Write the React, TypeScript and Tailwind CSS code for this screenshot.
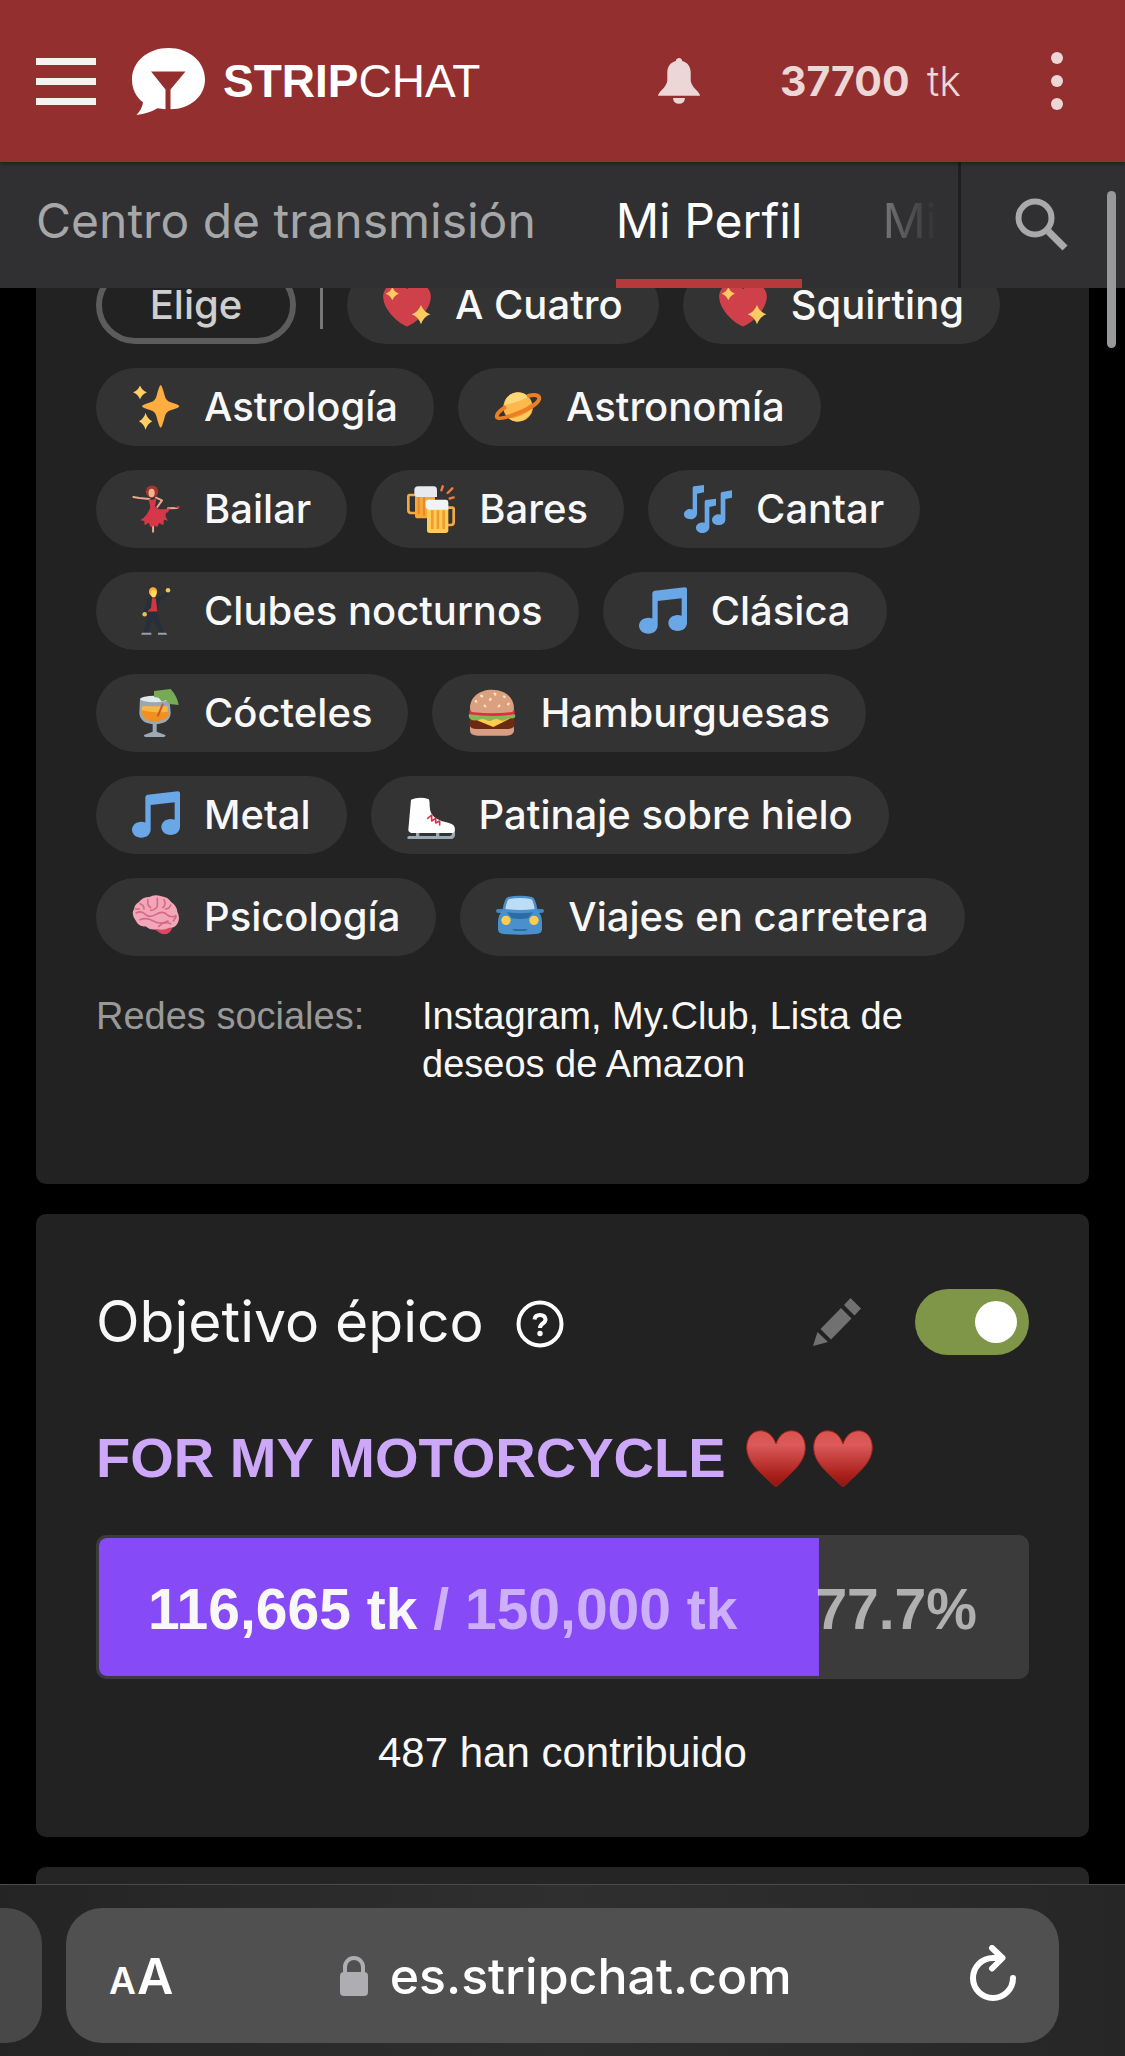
import type { ReactNode } from "react";

const NOTE =
  "M34.209.206L11.791 2.793C10.806 2.907 10 3.811 10 4.803v18.782C9.09 23.214 8.075 23 7 23c-3.865 0-7 2.685-7 6 0 3.314 3.135 6 7 6s7-2.686 7-6V10.539l18-2.077v13.124c-.91-.372-1.925-.586-3-.586-3.865 0-7 2.685-7 6 0 3.314 3.135 6 7 6s7-2.686 7-6V1.803c0-.992-.806-1.71-1.791-1.597z";

const art: Record<string, ReactNode> = {
  heart: (
    <>
      <path
        fill="#d0404b"
        d="M35.885 11.833c0-5.45-4.418-9.868-9.867-9.868-3.308 0-6.227 1.633-8.018 4.129-1.791-2.496-4.71-4.129-8.017-4.129-5.45 0-9.868 4.417-9.868 9.868 0 .772.098 1.52.266 2.241C1.751 22.587 11.216 31.568 18 34.034c6.783-2.466 16.249-11.447 17.617-19.959.17-.721.268-1.469.268-2.242z"
      />
      <path
        fill="#fbcb62"
        d="M7 4.500Q8.300 8.200 12 9.500Q8.300 10.800 7 14.500Q5.700 10.800 2 9.500Q5.700 8.200 7 4.500zM28.500 18Q30.500 23.300 35.500 25Q30.500 26.800 28.500 32.500Q26.500 26.800 21.500 25Q26.500 23.300 28.500 18z"
      />
    </>
  ),
  sparkles: (
    <>
      <path
        fill="#ffac40"
        d="M21.500 1.500Q22.500 1.500 24.800 10.500Q25.800 13.500 29 14.500Q35.500 16.300 35.500 17.500Q35.500 18.700 29 20.500Q25.800 21.500 24.800 24.500Q22.500 33.500 21.500 33.500Q20.500 33.500 18.200 24.500Q17.200 21.500 14 20.500Q7.500 18.700 7.500 17.500Q7.500 16.300 14 14.500Q17.200 13.500 18.200 10.500Q20.500 1.500 21.500 1.500z"
      />
      <path
        fill="#ffcf66"
        d="M6 1.800Q7.500 5.500 11.200 7Q7.500 8.500 6 12.200Q4.500 8.500 .8 7Q4.500 5.500 6 1.800zM10.200 22.500Q11.700 27 15.200 28.700Q11.700 30.500 10.200 35Q8.700 30.500 5.200 28.700Q8.700 27 10.200 22.500z"
      />
    </>
  ),
  planet: (
    <>
      <circle cx="18" cy="18" r="11" fill="#ffb84d" />
      <path fill="#ffd778" d="M9 12a11 11 0 0 1 17-1.500q-8 4-18 6z" />
      <path fill="#f59b2e" d="M9 24q10-1 19-9l1 5A11 11 0 0 1 22 28q-8 2-13-4z" />
      <path fill="#ffcc63" d="M11 26.500q8 0 17.500-7A11 11 0 0 1 11 26.500z" />
      <path
        fill="none"
        stroke="#ed7f23"
        strokeWidth="3"
        strokeLinecap="round"
        d="M26 9.500q6.500-1.300 7.800 1.200c1 3-5 7.500-13.500 11S3.500 28 2.200 25.500q-.8-2.500 5.600-7"
      />
    </>
  ),
  dancer: (
    <>
      <path
        fill="none"
        stroke="#e8a98a"
        strokeWidth="1.500"
        strokeLinecap="round"
        strokeLinejoin="round"
        d="M13 10.500L5.500 9.700 1 9M18 9.500l4.500 2-3.500 5M27 17.500l7-.3M15.800 31v4"
      />
      <circle cx="15" cy="5" r="4.700" fill="#a5382c" />
      <ellipse cx="14.700" cy="6" rx="2.300" ry="3.200" fill="#edb597" />
      <path
        fill="#d63849"
        d="M12.500 10.300l2.500 1 3.300-1.300-1 6.500c2.500 2.500 8 1.800 11.200.7l-1.500 3.300c-2 0-2 2-1.500 3.800l1.500 2.500-3-.7-.5 4-3-1.600-1.700 3-2.200-1.200-2.600 1.300-1.500-3.200-3 1.800-.3-3.200-3-.5c4-2.500 6.500-6 7.500-10zM31.500 17l4-1.500v2.200z"
      />
    </>
  ),
  beer: (
    <>
      <path
        fill="none"
        stroke="#f4a944"
        strokeWidth="2"
        d="M7 7.500H2q-1 0-1 1V19q0 2 2 2h4M30 17h4q1 0 1 1v10q0 2-2 2h-3"
      />
      <path fill="#f9a63a" d="M6 6h15v19H8q-2 0-2-2z" />
      <path fill="#e88926" d="M8 9h1.500v13H8zM12 9h1.500v14H12z" />
      <path fill="#e7ebef" d="M5.500 4q0-3 3-3H20q2.500 0 2.500 3v5H8q-2.500 0-2.500-3z" />
      <path fill="#ffcb57" d="M15 16h16v18q0 2-2 2H17q-2 0-2-2z" />
      <path fill="#f39c2d" d="M18 19h2v14h-2zM22.200 19h2v14h-2zM26.500 19h2v14h-2z" />
      <path fill="#f1f4f6" d="M14 13q0-2 2-2h13q2 0 2 2.500v5H17q-3 0-3-3z" />
      <path
        stroke="#f07d3d"
        strokeWidth="1.800"
        strokeLinecap="round"
        d="M26.800 1l-1 3M34 2.500L30.500 6M35 9.300l-3 .8"
      />
    </>
  ),
  notes: (
    <path
      fill="#6aa7e6"
      d="M6.500 2.200q0-1 1-1.200L15 0v5.500l-5.200 1V21c0 2.500-2 4.700-4.800 4.700C1.700 25.700 0 24 0 22s1.900-4 4.500-4q1.200 0 2 .3zM15.500 12.500q0-1 1-1.200l7.500-1v5l-5 1.200V31.500c0 2.500-2.300 4.500-5 4.500s-5-1.700-5-4 2.200-3.900 5-3.900q.8 0 1.500.2zM27.500 6.500q0-1 1-1.200L36 4v5.500l-5 1V26c0 2.300-2.200 4-5 4s-5-1.500-5-3.800S23.200 22 26 22q.8 0 1.500.3z"
    />
  ),
  note: <path fill="#6aa7e6" d={NOTE} />,
  suit: (
    <>
      <path
        fill="#27303a"
        d="M12 8l6 .5 6-3 2.500-2 1 1.500L21 11l-2.500 8 2.500 7 3 8h-3.500L15.500 25 12 34H8.500l3-9 .8-7-2.500 2-1.500-1z"
      />
      <ellipse cx="15.800" cy="3.600" rx="3.100" ry="3.500" fill="#ffad3b" />
      <ellipse cx="16.200" cy="5" rx="2" ry="2.800" fill="#ffdc5d" />
      <path fill="#d4363e" d="M15 8.500h2.800l1.200 9.800h-7.500l2.800-2.800z" />
      <circle cx="27" cy="2.400" r="1.700" fill="#f2cb57" />
      <circle cx="9.500" cy="20.500" r="1.700" fill="#e8c14f" />
      <path fill="#96a0a9" d="M7.500 34.300h7v1.500H6.800zM19.500 34.300h6l1 1.500h-7z" />
    </>
  ),
  cocktail: (
    <>
      <path fill="#9aaab6" d="M15.500 24h3v8l6.500 2.500q.5 1.300-1.500 1.500h-13q-2-.2-1.500-1.500l6.500-2.500z" />
      <path fill="#9ba8b2" d="M6 7h22l1 11q-.5 8-12 8.500Q6 26 5.500 18z" />
      <path fill="#f19020" d="M7.500 14h19.300l.7 5q-1 5-10.500 5.500Q8 24 7.500 18z" />
      <path fill="#fcb640" d="M7.500 13h19.300v4q-9 1.500-19.300-1z" />
      <ellipse cx="17" cy="7.500" rx="10.700" ry="2.500" fill="#e2e9ee" />
      <path stroke="#c35b2a" strokeWidth="1.500" strokeLinecap="round" d="M23 11.500L19.500 20" />
      <path fill="#76aa55" d="M16.500 1.500L29 0q5 5.500 6 12l-7-.8-2.500-3-3 1.300-2.500-3-3.500-.5z" />
    </>
  ),
  burger: (
    <>
      <path fill="#d99e82" d="M1.500 27h33v4q0 4-6 4H7.500q-6 0-6-4z" />
      <path fill="#6d2a12" d="M1 24q0-2 3-2h28q3 0 3 2v2q0 4-6 4H7q-6 0-6-4z" />
      <path fill="#ffcc4d" d="M1.500 20.500h33L28 24l-9 4.500L8 24z" />
      <path fill="#88b653" d="M.5 19.500q0-1 2-1h31q2 0 2 1.500 0 2.500-3.500 2-2 0-3.500 1-2.500 1.500-5 0-2.500-1.200-5 .3-2.500 1.500-5 0-2.500-1.500-5-.3-8 2-8-3.500z" />
      <path fill="#dd2e44" d="M1 16h34v3q-17 2.500-34 0z" />
      <path fill="#dba07f" d="M18 .5c10 0 16.500 6 16.500 14q0 3-3 3-13.500 1.500-27 0-3 0-3-3C1.500 6.500 8 .5 18 .5z" />
      <path
        stroke="#ffe8b6"
        strokeWidth="1.700"
        strokeLinecap="round"
        d="M10 5l.5.500M20 3.500l.4.600M27 5.500l.4.500M5.800 9l.4.500M17 7.500l-.5.600M30.500 11l-.4.500M12.500 12.500l.4.500M23.500 12.500l-.4.500"
      />
    </>
  ),
  skate: (
    <>
      <path
        stroke="#9babb6"
        strokeWidth="2.500"
        fill="none"
        strokeLinecap="round"
        d="M1.500 35H32q3 0 3-3.500M8 30v4M23 30v4"
      />
      <path
        fill="#fff"
        d="M3 6.500Q9 4 16 6q1 0 1 5 0 6 4.500 9.500 4 2.500 10 3.500 4.500 1 4.500 5 0 2.500-3 2.500H5q-4 0-4-2.500z"
      />
      <path
        stroke="#dd2e44"
        strokeWidth="1.200"
        strokeLinecap="round"
        strokeLinejoin="round"
        fill="none"
        d="M15.500 20.500l3-2.500v4.500l3-2v3.500l3-1.500v3"
      />
    </>
  ),
  brain: (
    <>
      <path fill="#db4860" d="M17 25l11-2 2.500 2q-1.500 6-6 6-3.500 0-7.500-4z" />
      <path
        fill="#f2a6b8"
        d="M5 7q3-4 8-4 4-2.500 9-.5 5 .5 7.500 4.500 4 2.500 4.500 7 2.500 5 0 9-2 3.500-6 3-5 2.500-9 1-5 1.500-9-2-5 .5-7-4Q-1 16 1.500 12 2 8.500 5 7z"
      />
      <path
        fill="none"
        stroke="#d36b86"
        strokeWidth="1.200"
        strokeLinecap="round"
        d="M6 8q3 1 3 4M12 5q-1 4 2 6M19 4v6q-2 3-5 3M24 5q2 4-1 6M29 9q-1 3-4 3M3 15q4-2 7 1t8 0 8 0 7 1M6 20q5-2 10 1t11 0M20 25q4-4 9-2M2.500 12h3M31 21l2-3"
      />
    </>
  ),
  car: (
    <>
      <path fill="#4289c1" d="M0 13.500q0-1.500 1.500-1.500H5v3H2q-2 0-2-1.500zM36 13.500q0-1.500-1.500-1.500H31v3h3q2 0 2-1.500z" />
      <path
        fill="#4a90cc"
        d="M9 3q9-2 18 0 2.500.5 4 9l2 4q1.500 2 1.500 7v4q0 3-3 3.500-13.500 1.500-27 0-3-.5-3-3.500v-4q0-5 1.500-7l2-4q1.500-8.500 4-9z"
      />
      <path fill="#bbddf5" d="M10 4.500q8-1.500 16 0 1.800.5 3 7.500-11 1.500-22 0 1.200-7 3-7.500z" />
      <path fill="#2b6ca3" d="M8 14.500q10 1.500 20 0-3 3-4 4.500-6 1-12 0-1-1.500-4-4.500zM12 27h12l-2 1.500h-8z" />
      <circle cx="7.500" cy="20.500" r="3.500" fill="#ffcc4d" />
      <circle cx="28.500" cy="20.500" r="3.500" fill="#ffcc4d" />
    </>
  ),
};

const interests: [string, string][] = [
  ["heart", "A Cuatro"],
  ["heart", "Squirting"],
  ["sparkles", "Astrología"],
  ["planet", "Astronomía"],
  ["dancer", "Bailar"],
  ["beer", "Bares"],
  ["notes", "Cantar"],
  ["suit", "Clubes nocturnos"],
  ["note", "Clásica"],
  ["cocktail", "Cócteles"],
  ["burger", "Hamburguesas"],
  ["note", "Metal"],
  ["skate", "Patinaje sobre hielo"],
  ["brain", "Psicología"],
  ["car", "Viajes en carretera"],
];

function Chip({ icon, label }: { icon: string; label: string }) {
  return (
    <li className="flex h-[78px] items-center gap-6 rounded-full bg-[#333333] px-9">
      <svg viewBox="0 0 36 36" className="size-12 shrink-0" fill="none" aria-hidden="true">
        {art[icon]}
      </svg>
      <span className="font-medium whitespace-nowrap text-[#f8f8f8]">{label}</span>
    </li>
  );
}

function Header() {
  return (
    <header className="z-20 flex h-[162px] shrink-0 items-center bg-[#942f30] px-9 shadow-[0_2px_4px_rgba(0,0,0,0.35)]">
      <button aria-label="Menú" className="flex w-[60px] flex-col gap-[13px]">
        <span className="h-[7px] bg-[#f6f2f2]" />
        <span className="h-[7px] bg-[#f6f2f2]" />
        <span className="h-[7px] bg-[#f6f2f2]" />
      </button>
      <a href="#inicio" className="ml-9 flex items-center gap-[18px] text-white">
        <svg viewBox="0 0 73 67" className="h-[67px] w-[73px]" aria-hidden="true">
          <path
            fill="#fff"
            d="M36.500 0C57 0 73 13.500 73 31.500 73 48.500 58 61 38.500 61.300V41.500L53.500 23.500H19L33.500 41.500V61.300L25.500 60.300Q17 65.500 4.500 67 10.500 60.500 11 54.300C4 49 0 41 0 31.500 0 13.500 16 0 36.500 0z"
          />
        </svg>
        <span className="font-['Liberation_Sans',sans-serif] text-[46px] leading-none">
          <b>STRIP</b>CHAT
        </span>
      </a>
      <button aria-label="Notificaciones" className="ml-auto">
        <svg viewBox="0 0 42 46" className="h-[46px] w-[42px]" aria-hidden="true">
          <path
            fill="#ecd6d6"
            d="M21 0q2.800 0 3.200 3C30 4.500 32.500 9 32.700 14v8q0 4 4.500 9Q42 35.500 42 37.800H0Q0 35.500 4.800 31q4.500-5 4.500-9v-8C9.500 9 12 4.500 17.800 3 18.200 0 21 0 21 0zM15 40h12q-.5 5.800-6 5.800T15 40z"
          />
        </svg>
      </button>
      <p className="ml-20 text-[41px] leading-none whitespace-nowrap text-[#ecd6d6]">
        <b>37700</b> <span className="ml-1.5 font-light">tk</span>
      </p>
      <button aria-label="Más opciones" className="mr-[26px] ml-[90px] flex flex-col gap-[11px]">
        <span className="size-3 rounded-full bg-[#ecd6d6]" />
        <span className="size-3 rounded-full bg-[#ecd6d6]" />
        <span className="size-3 rounded-full bg-[#ecd6d6]" />
      </button>
    </header>
  );
}

function Tabs() {
  return (
    <nav className="z-10 flex h-[126px] shrink-0 bg-[#303032]">
      <div className="flex min-w-0 flex-1 gap-20 overflow-hidden border-r-3 border-[#1f1f20] pl-9 text-5xl whitespace-nowrap">
        <a href="#centro" className="flex items-center pb-2 text-[#a6a7a8]">
          Centro de transmisión
        </a>
        <a href="#perfil" className="flex items-center border-b-9 border-[#b6393c] pt-px text-white">
          Mi Perfil
        </a>
        <a
          href="#mi"
          className="flex items-center bg-gradient-to-r from-[#77787a] to-[#303032] bg-clip-text pb-2 text-transparent"
        >
          Mi
        </a>
      </div>
      <button aria-label="Buscar" className="flex w-[164px] items-center pl-[54px]">
        <svg viewBox="0 0 54 54" className="size-[54px]" fill="none" stroke="#a9a9ab" aria-hidden="true">
          <circle cx="20" cy="20" r="16.500" strokeWidth="6" />
          <path d="M33.500 33.500L50 50" strokeWidth="7" />
        </svg>
      </button>
    </nav>
  );
}

function Profile() {
  return (
    <section className="rounded-b-[10px] bg-[#222222] px-[60px] pb-24">
      <ul className="flex flex-wrap items-center gap-6 text-[40px] leading-none">
        <li className="flex items-center gap-6">
          <button className="h-[78px] w-[200px] rounded-full border-6 border-[#5c5c5c] font-medium text-[#cfcfcf]">
            Elige
          </button>
          <span className="h-12 w-[3px] bg-[#777777]" />
        </li>
        {interests.map(([icon, label]) => (
          <Chip key={label} icon={icon} label={label} />
        ))}
      </ul>
      <dl className="mt-9 flex font-['Liberation_Sans',sans-serif] text-[38px] leading-12">
        <dt className="w-[326px] shrink-0 text-[#999999]">Redes sociales:</dt>
        <dd className="max-w-[520px] text-[#f8f8f8]">Instagram, My.Club, Lista de deseos de Amazon</dd>
      </dl>
    </section>
  );
}

function Heart() {
  return (
    <svg viewBox="0 0 60 57" className="h-[57px] w-[60px]" aria-hidden="true">
      <defs>
        <linearGradient id="heart" x1="0" y1="0" x2="0" y2="1">
          <stop offset="0" stopColor="#d9534c" />
          <stop offset=".25" stopColor="#dc5a5c" />
          <stop offset=".8" stopColor="#a91f19" />
          <stop offset="1" stopColor="#8f1610" />
        </linearGradient>
      </defs>
      <path
        fill="url(#heart)"
        stroke="#a3231c"
        d="M30 14C33 5 39 .8 45.500 .8 54 .8 59.300 8 59.300 17.500 59.300 34 43 44 32 55.500Q30 57 28 55.500C17 44 .7 34 .7 17.500 .7 8 6 .8 14.500 .8 21 .8 27 5 30 14z"
      />
    </svg>
  );
}

function EpicGoal() {
  const percent = 77.7;
  return (
    <section className="mt-[30px] rounded-[10px] bg-[#222222] px-[60px] pt-[75px] pb-[60px]">
      <div className="flex items-center">
        <h2 className="text-[57px] leading-[66px] text-[#f8f8f8]">
          <label htmlFor="goal">Objetivo épico</label>
        </h2>
        <button aria-label="Ayuda" className="ml-8 pt-1">
          <svg viewBox="0 0 48 48" className="size-12" fill="none" stroke="#fff" aria-hidden="true">
            <circle cx="24" cy="24" r="21.500" strokeWidth="4" />
            <path d="M18.500 19.500q.5-4.500 5.500-4.500t5.500 4.300q0 2.500-2.700 4.200t-2.800 4.500" strokeWidth="4" />
            <circle cx="24" cy="33.500" r="2.700" fill="#fff" stroke="none" />
          </svg>
        </button>
        <button aria-label="Editar" className="ml-auto">
          <svg viewBox="0 0 48 48" className="size-12" fill="#717171" aria-hidden="true">
            <path d="M37.500 0L48 10.500 41.500 17.500 31 7zM28 10L38.500 20.500 18 41.500 7.500 31zM4.500 34L15 44 0 48z" />
          </svg>
        </button>
        <input
          id="goal"
          type="checkbox"
          role="switch"
          defaultChecked
          className="ml-[54px] flex h-[66px] w-[114px] appearance-none items-center justify-start rounded-full bg-[#555555] px-3 before:size-[42px] before:rounded-full before:bg-white before:content-[''] checked:justify-end checked:bg-[#7f9548]"
        />
      </div>
      <div className="mt-[70px] flex items-center gap-[7px] font-['Liberation_Sans',sans-serif]">
        <h3 className="mr-[13px] text-[56px] leading-[66px] font-bold whitespace-nowrap text-[#cda8f8]">
          FOR MY MOTORCYCLE
        </h3>
        <Heart />
        <Heart />
      </div>
      <div
        role="progressbar"
        aria-label="Objetivo épico"
        aria-valuenow={percent}
        className="mt-11 grid h-36 overflow-hidden rounded-[10px] border-3 border-[#3c3a3a] bg-[#3b3b3b]"
      >
        <div
          className="col-start-1 row-start-1 h-full rounded-l-[8px] bg-[#864bf6]"
          style={{ width: `${percent}%` }}
        />
        <div className="col-start-1 row-start-1 flex items-center justify-between px-[49px] pt-1 font-['Liberation_Sans',sans-serif] text-[57px] leading-none font-bold whitespace-nowrap">
          <span className="text-[#f8f8f8]">
            116,665 tk <span className="text-[#ceb0fa]">/ 150,000 tk</span>
          </span>
          <span className="text-white/60">77.7%</span>
        </div>
      </div>
      <p className="mt-[50px] text-center font-['Liberation_Sans',sans-serif] text-[42px] leading-12 text-[#f8f8f8]">
        487 han contribuido
      </p>
    </section>
  );
}

function BrowserBar() {
  return (
    <footer className="z-20 flex h-[172px] shrink-0 gap-6 border-t border-[#4a4a4a] bg-gradient-to-r from-[#242424] via-[#2f2f2f] to-[#262626] pt-[23px]">
      <div className="h-[135px] w-[42px] rounded-r-[36px] bg-[#484848]" />
      <div className="mr-[66px] flex h-[135px] flex-1 items-center rounded-[36px] bg-[#505050] px-[43px] text-white">
        <button aria-label="Tamaño de texto" className="flex items-baseline gap-px leading-none font-semibold">
          <span className="text-[37px]">A</span>
          <span className="text-[50px]">A</span>
        </button>
        <button className="mx-auto flex items-center gap-[22px] pr-3 text-[50px] leading-none font-medium">
          <svg viewBox="0 0 28 40" className="h-10 w-7" aria-hidden="true">
            <rect y="16" width="28" height="24" rx="4" fill="#aeaeb2" />
            <path d="M5 17V11a9 9 0 0 1 18 0v6" fill="none" stroke="#aeaeb2" strokeWidth="4" />
          </svg>
          es.stripchat.com
        </button>
        <button aria-label="Recargar" className="pb-1.5">
          <svg
            viewBox="0 0 46 56"
            className="h-14 w-[46px]"
            fill="none"
            stroke="#fff"
            strokeWidth="6"
            strokeLinecap="round"
            strokeLinejoin="round"
            aria-hidden="true"
          >
            <path d="M43 33A20 20 0 1 1 23 13h9M22 3L32.500 13 22 23.500" />
          </svg>
        </button>
      </div>
    </footer>
  );
}

export default function App() {
  return (
    <div className="relative flex h-screen flex-col overflow-hidden bg-black font-['Inter',sans-serif]">
      <Header />
      <Tabs />
      <main className="min-h-0 flex-1 px-9">
        <div className="-mt-[22px]">
          <Profile />
          <EpicGoal />
          <section className="mt-[30px] h-16 rounded-[10px] bg-[#252525]" />
        </div>
      </main>
      <BrowserBar />
      <div className="absolute top-[191px] right-[9px] z-30 h-[157px] w-[9px] rounded-full bg-[#98999b]" />
    </div>
  );
}
